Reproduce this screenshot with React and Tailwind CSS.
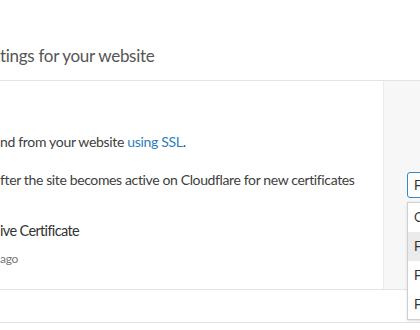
export default function App() {
  return (
    <div className="relative w-[420px] h-[330px] overflow-hidden bg-white text-[#404040]" style={{ fontFamily: 'Lato, "Liberation Sans", sans-serif' }}>

      <div className="h-[80px] pt-[44px]">
        <h1 className="text-[17px] leading-[24px] tracking-[-0.3px] text-[#555]">tings for your website</h1>
      </div>

      <div className="flex h-[210px] border-t border-b border-[#e3e3e3]">
        <div className="flex-1 flex flex-col">
          <p className="mt-[51px] text-[14px] leading-[20px] tracking-[-0.32px]">
            nd from your website <a className="text-[#2f7bbf]">using SSL</a>.
          </p>
          <p className="mt-[18px] text-[14px] leading-[20px] tracking-[-0.37px]">
            fter the site becomes active on Cloudflare for new certificates
          </p>
          <p className="mt-[31px] text-[14.5px] leading-[20px] tracking-[-0.65px] text-[#333]">ive Certificate</p>
          <p className="mt-[10px] text-[12px] leading-[16px] tracking-[-0.3px] text-[#777]">ago</p>
        </div>

        <div className="w-[37px] shrink-0 bg-[#f7f7f7] border-l border-[#ececec]">
          <div className="mt-[91px] ml-[23px] w-[60px] h-[26px] border border-[#3b86c6] rounded-[3px] bg-white text-[13px] leading-[24px] pl-[6px] text-[#333]">
            Flexible
          </div>
        </div>
      </div>

      <div className="h-[33px] border-b border-[#e3e3e3]"></div>

      <ul className="absolute left-[407px] top-[202px] w-[120px] border border-[#cfcfcf] bg-white text-[13px] text-[#333] shadow-sm">
        <li className="h-[29px] leading-[29px] pl-[6px]">Off</li>
        <li className="h-[29px] leading-[29px] pl-[6px] bg-[#ebebeb]">Flexible</li>
        <li className="h-[29px] leading-[29px] pl-[6px]">Full</li>
        <li className="h-[29px] leading-[29px] pl-[6px]">Full (strict)</li>
      </ul>
    </div>
  );
}
